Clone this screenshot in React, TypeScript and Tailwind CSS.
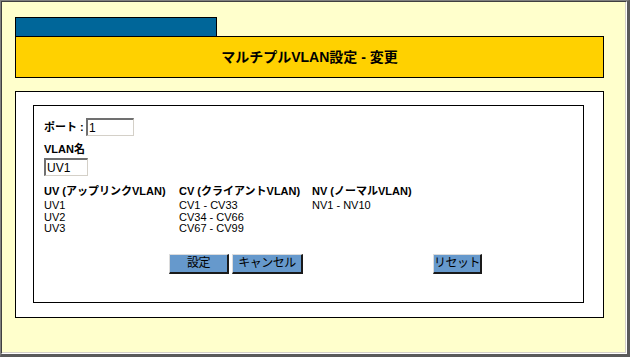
import React from "react";

const font = { fontFamily: '"Liberation Sans", "Noto Sans CJK JP", sans-serif' };

function Btn({ w, children }: { w: string; children: React.ReactNode }) {
  return (
    <div
      className={`${w} h-[20px] bg-[#6699cc] border-t border-l border-t-[#dcdcdc] border-l-[#dcdcdc] border-r-2 border-b-2 border-r-[#1a1a1a] border-b-[#1a1a1a] flex items-center justify-center text-[12px] text-black leading-none whitespace-nowrap tracking-[-0.5px]`}
    >
      {children}
    </div>
  );
}

function Field({ w, value }: { w: string; value: string }) {
  return (
    <div
      className={`${w} h-[18px] bg-white border-t-2 border-l-2 border-t-[#707070] border-l-[#707070] border-r border-b border-r-[#d4d0c8] border-b-[#d4d0c8] flex items-center pl-[1px] text-[12px] leading-none text-black`}
    >
      {value}
    </div>
  );
}

export default function App() {
  return (
    <div style={font} className="w-[630px] h-[357px] border-t border-l border-t-[#808080] border-l-[#808080] border-r-[3px] border-b-[3px] border-r-[#5a5a5a] border-b-[#5a5a5a]">
      <div className="w-full h-full border-t border-l border-t-[#404040] border-l-[#404040] border-r border-b border-r-white border-b-white">
        <div className="w-full h-full border-r border-b border-r-[#d4d0c8] border-b-[#d4d0c8] bg-[#ffffcc] pt-[15px] pl-[13px]">
          <div className="w-[589px]">
            <div className="w-[202px] h-[19px] bg-[#006699] border-t border-l border-r border-black" />
            <div className="h-[42px] bg-[#ffd100] border border-black flex items-center justify-center text-[14px] font-bold text-black">
              マルチプルVLAN設定 - 変更
            </div>
            <div className="mt-[13px] h-[227px] bg-white border border-black pt-[13px] pl-[17px]">
              <div className="w-[551px] h-[198px] border border-black pl-[10px] pt-[12px] text-black">
                <div className="flex items-center h-[18px]">
                  <span className="w-[42px] text-[11px] font-bold">ポート :</span>
                  <Field w="w-[48px]" value="1" />
                </div>
                <div className="mt-[7px] h-[13px] text-[11px] font-bold leading-[13px]">VLAN名</div>
                <div className="mt-[2px]">
                  <Field w="w-[44px]" value="UV1" />
                </div>
                <div className="mt-[9px] flex text-[11px] leading-[11.5px]">
                  <div className="w-[135px]">
                    <div className="font-bold leading-[13px] mb-[2px]">UV (アップリンクVLAN)</div>
                    <div>UV1</div>
                    <div>UV2</div>
                    <div>UV3</div>
                  </div>
                  <div className="w-[133px]">
                    <div className="font-bold leading-[13px] mb-[2px]">CV (クライアントVLAN)</div>
                    <div>CV1 - CV33</div>
                    <div>CV34 - CV66</div>
                    <div>CV67 - CV99</div>
                  </div>
                  <div>
                    <div className="font-bold leading-[13px] mb-[2px]">NV (ノーマルVLAN)</div>
                    <div>NV1 - NV10</div>
                  </div>
                </div>
                <div className="mt-[19px] flex pl-[125px]">
                  <Btn w="w-[60px]">設定</Btn>
                  <div className="w-[3px]" />
                  <Btn w="w-[71px]">キャンセル</Btn>
                  <div className="w-[130px]" />
                  <Btn w="w-[49px]">リセット</Btn>
                </div>
              </div>
            </div>
          </div>
        </div>
      </div>
    </div>
  );
}
